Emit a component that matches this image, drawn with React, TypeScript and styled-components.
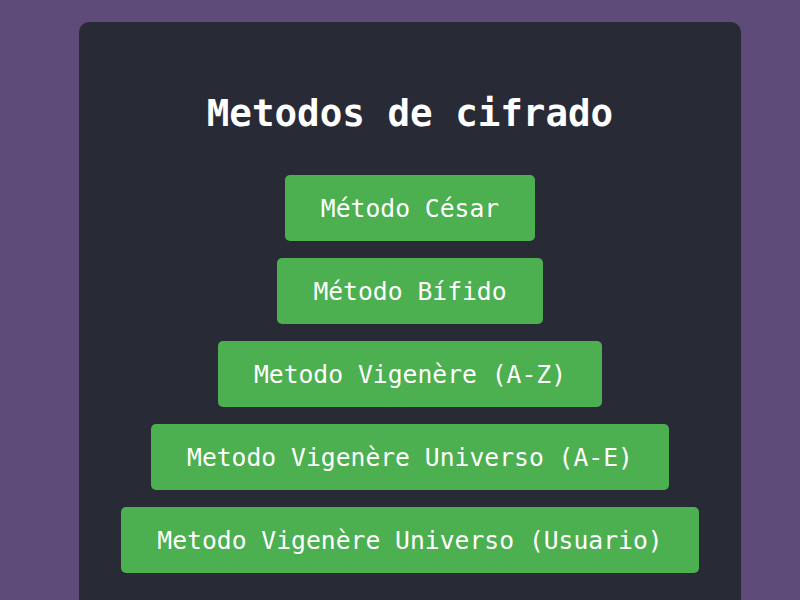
import React from "react";
import styled, { createGlobalStyle } from "styled-components";

const GlobalStyle = createGlobalStyle`
  html, body {
    margin: 0;
    padding: 0;
    background: #5e4b7a;
    font-family: "DejaVu Sans Mono", "Liberation Mono", monospace;
  }
`;

const Page = styled.div`
  width: 800px;
  height: 600px;
  overflow: hidden;
  display: flex;
  justify-content: center;
  padding-top: 22px;
  box-sizing: border-box;
  background: #5e4b7a;
`;

const Card = styled.div`
  width: 662px;
  margin-left: 20px;
  min-height: 640px;
  background: #282a36;
  border-radius: 10px;
  padding-top: 69px;
  box-sizing: border-box;
  display: flex;
  flex-direction: column;
  align-items: center;
`;

const Title = styled.h1`
  margin: 0 0 40px;
  font-size: 37.5px;
  line-height: 44px;
  font-weight: bold;
  color: #ffffff;
  font-family: "DejaVu Sans Mono", monospace;
`;

const ButtonList = styled.div`
  display: flex;
  flex-direction: column;
  align-items: center;
  gap: 17px;
`;

const MethodButton = styled.button`
  height: 66px;
  padding: 2px 36px 0;
  box-sizing: border-box;
  border: none;
  border-radius: 5px;
  background: #4caf50;
  color: #ffffff;
  font-family: "DejaVu Sans Mono", monospace;
  font-size: 24.7px;
  line-height: 28px;
  cursor: pointer;
  display: flex;
  align-items: center;
  justify-content: center;
  white-space: nowrap;
`;

const methods = [
  "Método César",
  "Método Bífido",
  "Metodo Vigenère (A-Z)",
  "Metodo Vigenère Universo (A-E)",
  "Metodo Vigenère Universo (Usuario)",
];

export default function App() {
  return (
    <>
      <GlobalStyle />
      <Page>
        <Card>
          <Title>Metodos de cifrado</Title>
          <ButtonList>
            {methods.map((m) => (
              <MethodButton key={m}>{m}</MethodButton>
            ))}
          </ButtonList>
        </Card>
      </Page>
    </>
  );
}
